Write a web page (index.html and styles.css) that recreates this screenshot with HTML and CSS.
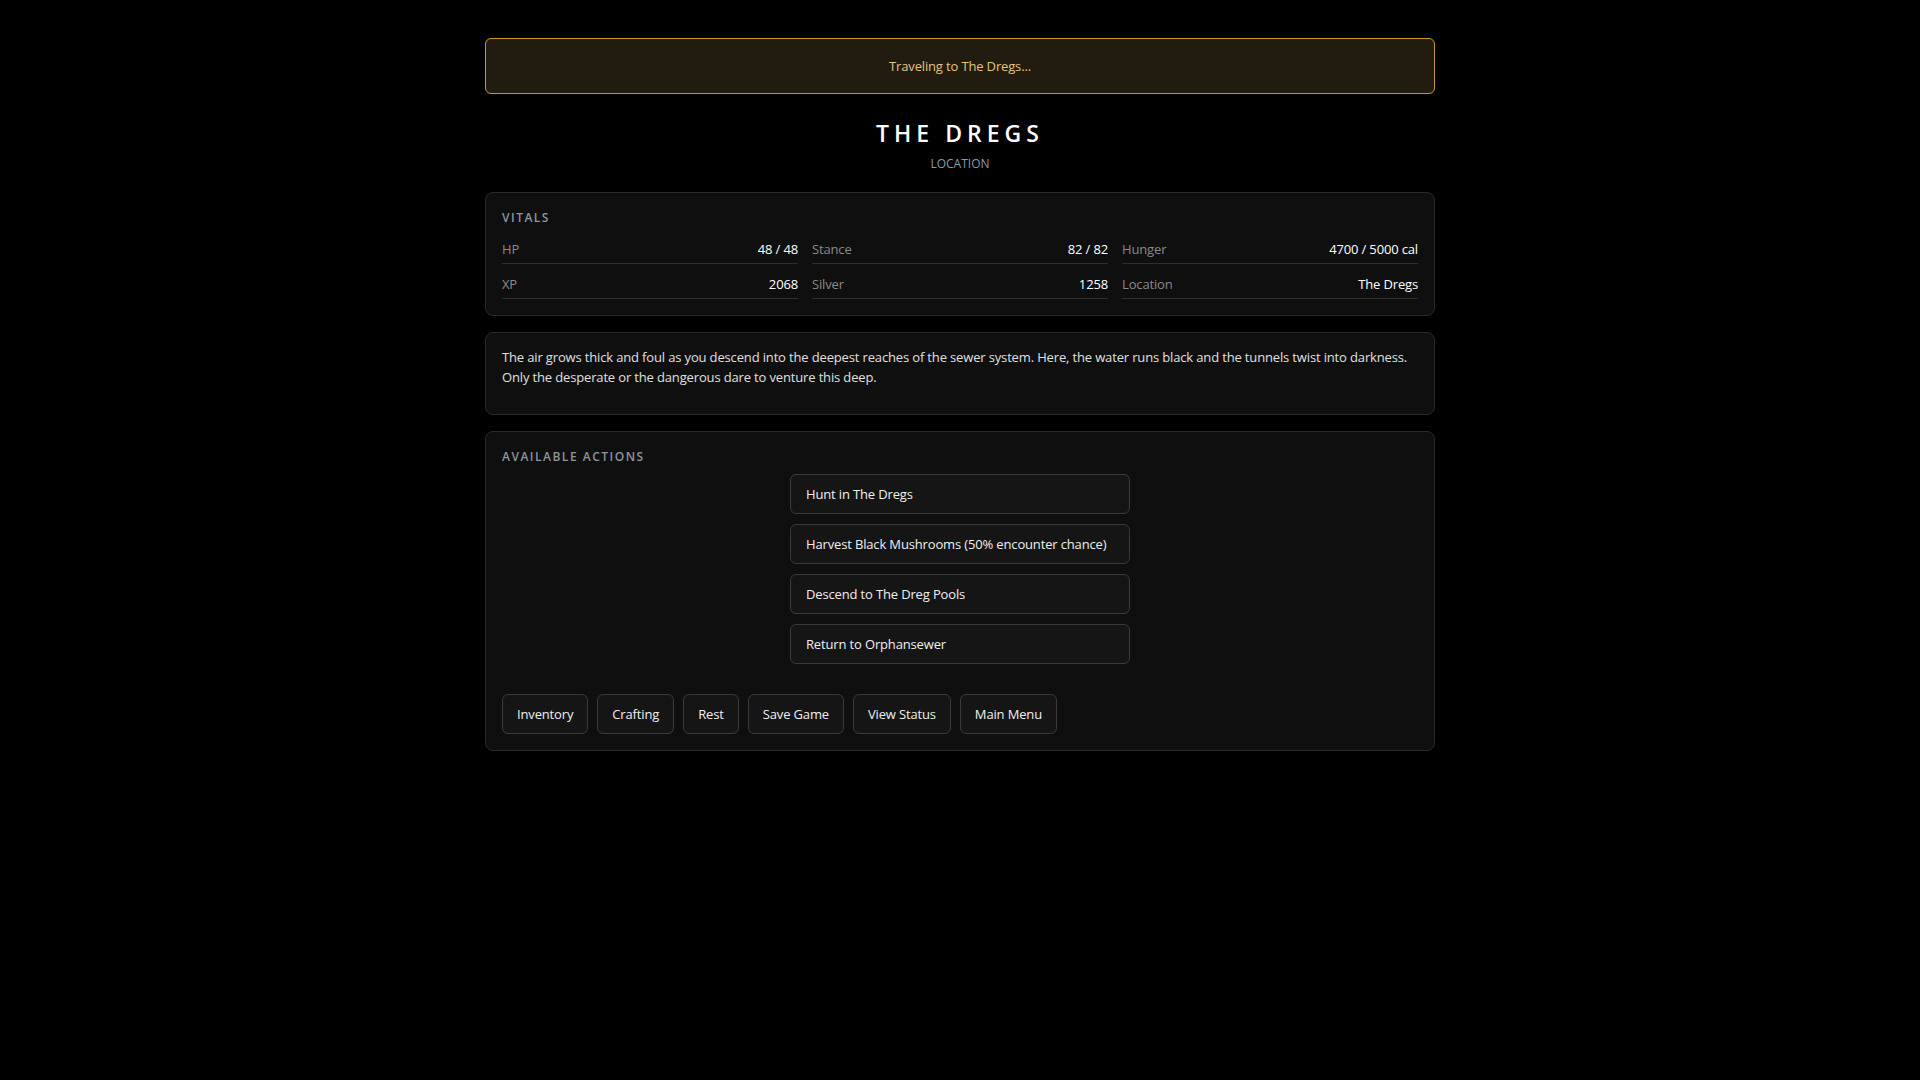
FILE: index.html
```html
<!DOCTYPE html>
<html lang="en">
<head>
    <meta charset="UTF-8">
    <meta name="viewport" content="width=device-width, initial-scale=1.0">
    <title>The Dregs</title>
    <link rel="stylesheet" href="styles.css">
</head>
<body>
    <div class="game">
        <div class="notice">Traveling to The Dregs...</div>

        <div class="location-header">
            <h1>THE DREGS</h1>
            <div class="location-type">LOCATION</div>
        </div>

        <div class="panel">
            <h3>VITALS</h3>
            <div class="vitals">
                <div class="stat"><span class="label">HP</span><span class="value">48 / 48</span></div>
                <div class="stat"><span class="label">Stance</span><span class="value">82 / 82</span></div>
                <div class="stat"><span class="label">Hunger</span><span class="value">4700 / 5000 cal</span></div>
                <div class="stat"><span class="label">XP</span><span class="value">2068</span></div>
                <div class="stat"><span class="label">Silver</span><span class="value">1258</span></div>
                <div class="stat"><span class="label">Location</span><span class="value">The Dregs</span></div>
            </div>
        </div>

        <div class="panel panel-text">
            <p class="description">The air grows thick and foul as you descend into the deepest reaches of the sewer system. Here, the water runs black and the tunnels twist into darkness. Only the desperate or the dangerous dare to venture this deep.</p>
        </div>

        <div class="panel">
            <h3>AVAILABLE ACTIONS</h3>
            <div class="actions">
                <button class="action-btn">Hunt in The Dregs</button>
                <button class="action-btn">Harvest Black Mushrooms (50% encounter chance)</button>
                <button class="action-btn">Descend to The Dreg Pools</button>
                <button class="action-btn">Return to Orphansewer</button>
            </div>
            <div class="menu-bar">
                <button class="menu-btn">Inventory</button>
                <button class="menu-btn">Crafting</button>
                <button class="menu-btn">Rest</button>
                <button class="menu-btn">Save Game</button>
                <button class="menu-btn">View Status</button>
                <button class="menu-btn">Main Menu</button>
            </div>
        </div>
    </div>
</body>
</html>
```

FILE: styles.css
```css
body {
    margin: 0;
    background-color: #000;
    color: #ddd;
    font-family: "Open Sans", "Noto Sans", sans-serif;
    font-size: 13px;
    letter-spacing: -0.15px;
}
.game {
    max-width: 950px;
    margin: 38px auto;
}
.notice {
    background: #221c10;
    border: 1px solid #c99a1e;
    border-radius: 6px;
    color: #e3c47e;
    text-align: center;
    padding: 18px;
    line-height: 18px;
}
.location-header {
    text-align: center;
    margin: 24px 0 20px;
}
h1 {
    margin: 0 0 8px;
    font-size: 23px;
    line-height: 30px;
    font-weight: 600;
    letter-spacing: 5px;
    color: #fff;
}
.location-type {
    font-size: 12px;
    line-height: 16px;
    letter-spacing: 0;
    color: #8c9aa8;
}
.panel {
    background: #0f0f0f;
    border: 1px solid #2a2a2a;
    border-radius: 8px;
    padding: 16px;
    margin-bottom: 16px;
}
.panel-text {
    padding-top: 14px;
}
h3 {
    margin: 0 0 8px;
    font-size: 12px;
    line-height: 18px;
    font-weight: 600;
    letter-spacing: 1.5px;
    color: #8e959c;
}
.vitals {
    display: grid;
    grid-template-columns: repeat(3, 1fr);
    column-gap: 14px;
    row-gap: 6px;
}
.stat {
    display: flex;
    justify-content: space-between;
    padding: 4px 0;
    line-height: 20px;
    border-bottom: 1px solid #2f2f2f;
}
.label {
    color: #8a8a8a;
}
.value {
    color: #fff;
}
.description {
    margin: 0 0 11px;
    line-height: 20px;
    color: #e0e0e0;
}
.actions {
    display: flex;
    flex-direction: column;
    align-items: center;
    gap: 10px;
}
.action-btn, .menu-btn {
    height: 40px;
    background: #151515;
    border: 1px solid #3a3a3a;
    border-radius: 6px;
    color: #f0f0f0;
    font-family: inherit;
    font-size: 13px;
    letter-spacing: -0.15px;
    cursor: pointer;
}
.action-btn {
    width: 340px;
    text-align: left;
    padding: 0 15px;
}
.menu-bar {
    display: flex;
    gap: 9px;
    margin-top: 30px;
}
.menu-btn {
    padding: 0 14px;
}
.action-btn:hover, .menu-btn:hover {
    background: #1e1e1e;
}
```
